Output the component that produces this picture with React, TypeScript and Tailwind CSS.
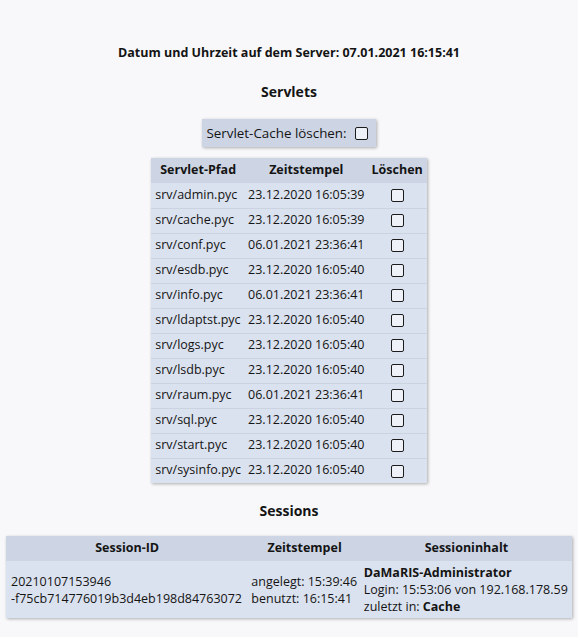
import React from "react";

const servlets: [string, string][] = [
  ["srv/admin.pyc", "23.12.2020 16:05:39"],
  ["srv/cache.pyc", "23.12.2020 16:05:39"],
  ["srv/conf.pyc", "06.01.2021 23:36:41"],
  ["srv/esdb.pyc", "23.12.2020 16:05:40"],
  ["srv/info.pyc", "06.01.2021 23:36:41"],
  ["srv/ldaptst.pyc", "23.12.2020 16:05:40"],
  ["srv/logs.pyc", "23.12.2020 16:05:40"],
  ["srv/lsdb.pyc", "23.12.2020 16:05:40"],
  ["srv/raum.pyc", "06.01.2021 23:36:41"],
  ["srv/sql.pyc", "23.12.2020 16:05:40"],
  ["srv/start.pyc", "23.12.2020 16:05:40"],
  ["srv/sysinfo.pyc", "23.12.2020 16:05:40"],
];

const Box = () => (
  <span className="inline-block w-[13px] h-[13px] rounded-[2px] border border-[#1c1c1c] bg-[#eef1f7] align-middle" />
);

export default function App() {
  return (
    <div className="min-h-[637px] w-full bg-[#f8f8fb] text-[#141414] text-[12.5px] [font-family:'Open_Sans',sans-serif] pt-[44px] flex flex-col items-center">
      <h2 className="font-bold text-[12.5px] leading-[17px]">
        Datum und Uhrzeit auf dem Server: 07.01.2021 16:15:41
      </h2>

      <h3 className="font-bold text-[14px] leading-[19px] mt-[21px]">Servlets</h3>

      <label className="mt-[18px] flex items-center gap-[8px] bg-[#cdd5e4] pl-[4px] pr-[8px] h-[28px] shadow-[1px_1px_3px_rgba(0,0,0,0.3)] text-[13.4px]">
        Servlet-Cache löschen: <Box />
      </label>

      <table className="mt-[11px] bg-[#dbe2ef] shadow-[1px_1px_3px_rgba(0,0,0,0.3)] border-collapse">
        <thead>
          <tr className="bg-[#cdd5e4] h-[25px]">
            <th className="font-bold px-[4px] text-center">Servlet-Pfad</th>
            <th className="font-bold px-[3px] text-center">Zeitstempel</th>
            <th className="font-bold px-[4px] text-center">Löschen</th>
          </tr>
        </thead>
        <tbody>
          {servlets.map(([p, t], i) => (
            <tr
              key={p}
              className={`h-[25px] ${i < servlets.length - 1 ? "border-b border-[#cbd2e0]" : ""}`}
            >
              <td className="px-[4px] text-left whitespace-nowrap">{p}</td>
              <td className="px-[3px] whitespace-nowrap">{t}</td>
              <td className="px-[4px] text-center">
                <Box />
              </td>
            </tr>
          ))}
        </tbody>
      </table>

      <h3 className="font-bold text-[14px] leading-[19px] mt-[18px]">Sessions</h3>

      <table className="mt-[16px] w-[566px] bg-[#dbe2ef] shadow-[1px_1px_3px_rgba(0,0,0,0.3)] border-collapse">
        <thead>
          <tr className="bg-[#cdd5e4] h-[25px]">
            <th className="font-bold px-[4px] text-center">Session-ID</th>
            <th className="font-bold px-[3px] text-center">Zeitstempel</th>
            <th className="font-bold px-[3px] text-center">Sessioninhalt</th>
          </tr>
        </thead>
        <tbody>
          <tr className="leading-[17px]">
            <td className="px-[5px] py-[3px] whitespace-nowrap">
              20210107153946
              <br />
              -f75cb714776019b3d4eb198d84763072
            </td>
            <td className="px-[3px] py-[3px] whitespace-nowrap">
              angelegt: 15:39:46
              <br />
              benutzt: 16:15:41
            </td>
            <td className="px-[3px] py-[3px] whitespace-nowrap">
              <b>DaMaRIS-Administrator</b>
              <br />
              Login: 15:53:06 von 192.168.178.59
              <br />
              zuletzt in: <b>Cache</b>
            </td>
          </tr>
        </tbody>
      </table>
    </div>
  );
}
